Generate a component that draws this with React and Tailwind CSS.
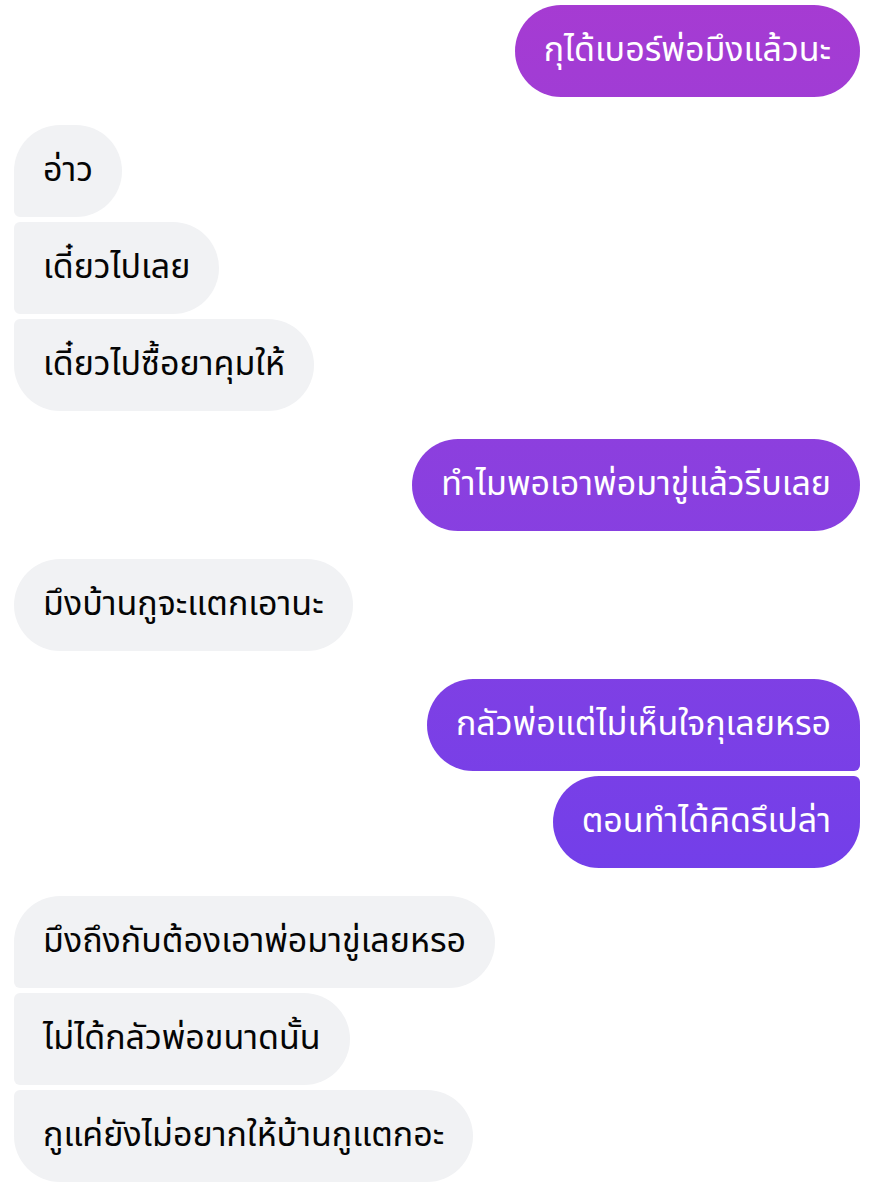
import React from 'react';

const messages = [
  { side: 'me', group: [{ text: 'กุได้เบอร์พ่อมึงแล้วนะ' }] },
  { side: 'them', group: [{ text: 'อ่าว' }, { text: 'เดี๋ยวไปเลย' }, { text: 'เดี๋ยวไปซื้อยาคุมให้' }] },
  { side: 'me', group: [{ text: 'ทำไมพอเอาพ่อมาขู่แล้วรีบเลย' }] },
  { side: 'them', group: [{ text: 'มึงบ้านกูจะแตกเอานะ' }] },
  { side: 'me', group: [{ text: 'กลัวพ่อแต่ไม่เห็นใจกุเลยหรอ' }, { text: 'ตอนทำได้คิดรึเปล่า' }] },
  { side: 'them', group: [{ text: 'มึงถึงกับต้องเอาพ่อมาขู่เลยหรอ' }, { text: 'ไม่ได้กลัวพ่อขนาดนั้น' }, { text: 'กูแค่ยังไม่อยากให้บ้านกูแตกอะ' }] },
];

const cornerClass = (side, i, n) => {
  if (n === 1) return 'rounded-full';
  const first = i === 0;
  const last = i === n - 1;
  if (side === 'me') {
    if (first) return 'rounded-[46px] rounded-br-md';
    if (last) return 'rounded-[46px] rounded-tr-md';
    return 'rounded-[46px] rounded-r-md';
  }
  if (first) return 'rounded-[46px] rounded-bl-md';
  if (last) return 'rounded-[46px] rounded-tl-md';
  return 'rounded-[46px] rounded-l-md';
};

const Bubble = ({ text, side, corners }) => (
  <div
    className={
      'h-[92px] flex items-center px-[29px] text-[34px] leading-none ' +
      corners +
      (side === 'me'
        ? ' text-white bg-linear-to-b from-[#a63bd2] to-[#5e3cf2] bg-fixed'
        : ' text-[#050505] bg-[#f1f2f4]')
    }
  >
    {text}
  </div>
);

export default function App() {
  return (
    <div
      className="w-[879px] h-[1200px] bg-white pt-[5px] pr-[19px] pl-[14px] flex flex-col gap-[28px] overflow-hidden"
      style={{ fontFamily: '"Noto Sans Thai", "Noto Sans", "DejaVu Sans", sans-serif' }}
    >
      {messages.map((m, gi) => (
        <div
          key={gi}
          className={'flex flex-col gap-[5px] ' + (m.side === 'me' ? 'items-end' : 'items-start')}
        >
          {m.group.map((b, i) => (
            <Bubble key={i} text={b.text} side={m.side} corners={cornerClass(m.side, i, m.group.length)} />
          ))}
        </div>
      ))}
    </div>
  );
}
